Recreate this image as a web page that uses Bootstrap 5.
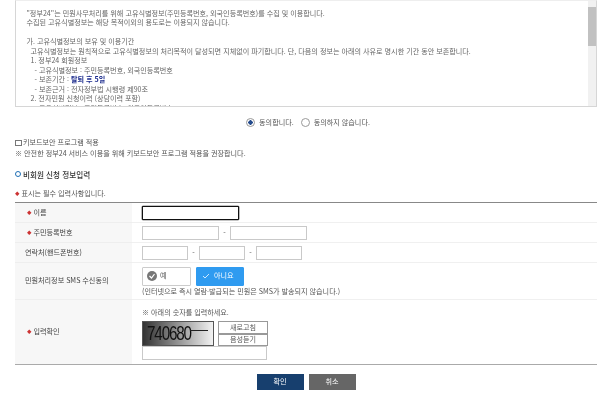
<!DOCTYPE html>
<html lang="ko"><head><meta charset="utf-8"><title>비회원 신청 정보입력</title>
<link rel="stylesheet" href="https://cdn.jsdelivr.net/npm/bootstrap@5.3.0/dist/css/bootstrap.min.css">
<style>
html,body{height:400px;overflow:hidden;background:#fff}
body{font-family:"Noto Sans CJK KR","Liberation Sans",sans-serif;font-size:7.1px;line-height:9.5px;color:#555;padding:0 3px 0 15px;filter:blur(.35px)}
.termsbox{height:107px;border:1px solid #d6d6d6;border-top-color:#eee;overflow:hidden}
.termstext{padding:7.5px 0 0 10.5px;white-space:pre;overflow:hidden;color:#666;height:105px}
.termstext b{color:#1a2a8c;font-weight:700}
.sbar{width:8px;background:#f1f1f1;padding:6px 0 7px}
.sthumb{height:39px;background:#c1c1c1}
.agree{height:31px}
.agree label{display:flex;align-items:center;gap:4px}
.agree .first{margin-left:4px;margin-right:7px}
.rad{width:9px;height:9px;border-radius:50%;border:1px solid #999;display:inline-block;background:#fff}
.rad.on{background:radial-gradient(circle,#234a8c 0 2px,#fff 2.4px)}
.kbox{width:7px;height:6px;border:1px solid #777;display:inline-block;margin-right:1px}
.notep{margin-top:1.5px}
.sectitle{font-size:7.6px;font-weight:500;color:#333;margin-top:10px;line-height:11px}
.ring{width:6px;height:6px;border:1.5px solid #1f6fb5;border-radius:50%;display:inline-block;margin-right:2px}
.req{color:#c33;font-size:4.5px;vertical-align:1px}
.reqnote{margin-top:9px;margin-bottom:4px}
.formtb{width:100%;border-top:1px solid #888;border-bottom:1px solid #aaa;margin:0}
.formtb th{width:117px;background:#f7f7f7;font-weight:400;color:#444;border-bottom:1px solid #eee;padding:0 0 0 10px;vertical-align:middle}
.formtb th.reqcell{padding-left:12px}
.formtb td{padding:0 0 0 10px;border-bottom:1px solid #f0f0f0;vertical-align:middle}
.formtb tr:last-child th,.formtb tr:last-child td{border-bottom:0}
.r20{height:20px}.r36{height:37px}.r36 td{padding-top:1px}.r64{height:65px}
.inp{height:14px;border:1px solid #c9c9c9;background:#fff;display:block;padding:0;border-radius:0}
.w97{width:97px}.w77{width:77px}.w46{width:46px}.w125{width:125px}
.focused{border:1px solid #111;border-radius:1px;box-shadow:0 0 0 .3px #111}
.dash{width:11px;text-align:center}
.pick{height:19px;font-size:7.1px;line-height:1;border-radius:1px;padding:0 0 0 4px;gap:3px;display:flex;align-items:center;width:49px;border:1px solid #ccc;background:#fff;color:#555}
.pick.sel{background:#2f9bf0;border-color:#2f9bf0;color:#fff;width:48px;margin-left:5px}
.smsnote{margin-top:1.5px}
.capnote{padding-top:4px;margin-bottom:4px}
.capt{width:72px;height:25px;background:linear-gradient(90deg,#333,#f2f2f2);border:1px solid #555;position:relative;overflow:hidden}
.capt span{display:inline-block;font-family:"Liberation Sans",sans-serif;font-size:20px;letter-spacing:-1.5px;color:#111;line-height:23px;transform:scaleX(.76);transform-origin:left center;margin-left:4px}
.capt i{position:absolute;left:47px;top:8px;width:18px;height:1px;background:#222}
.caprow{height:25px}
.capbtn{width:50px;height:12.5px;border:1px solid #999;background:#fff;font-size:7.1px;line-height:1;padding:0;border-radius:0;color:#555}
.actions{margin-top:9px;gap:5px}
.act{width:47px;height:16px;border-radius:0;border:0;font-size:7.1px;line-height:1;padding:0;color:#fff}
.act.navy{background:#173f6e}.act.gray{background:#666}
</style></head>
<body>
<div class="termsbox d-flex">
<div class="termstext flex-grow-1">"정부24"는 민원사무처리를 위해 고유식별정보(주민등록번호, 외국인등록번호)를 수집 및 이용합니다.
수집된 고유식별정보는 해당 목적이외의 용도로는 이용되지 않습니다.

가. 고유식별정보의 보유 및 이용기간
  고유식별정보는 원칙적으로 고유식별정보의 처리목적이 달성되면 지체없이 파기합니다. 단, 다음의 정보는 아래의 사유로 명시한 기간 동안 보존합니다.
  1. 정부24 회원정보
    - 고유식별정보 : 주민등록번호, 외국인등록번호
    - 보존기간 : <b>탈퇴 후 5일</b>
    - 보존근거 : 전자정부법 시행령 제90조
  2. 전자민원 신청이력 (상담이력 포함)
    - 고유식별정보 : 주민등록번호, 외국인등록번호</div>
<div class="sbar flex-shrink-0"><div class="sthumb"></div></div>
</div>

<div class="agree d-flex align-items-center justify-content-center">
<label class="first"><span class="rad on"></span>동의합니다.</label>
<label><span class="rad"></span>동의하지 않습니다.</label>
</div>

<div class="d-flex align-items-center"><span class="kbox"></span>키보드보안 프로그램 적용</div>
<div class="notep">※ 안전한 정부24 서비스 이용을 위해 키보드보안 프로그램 적용을 권장합니다.</div>

<div class="sectitle d-flex align-items-center"><span class="ring"></span>비회원 신청 정보입력</div>
<div class="reqnote"><span class="req">◆</span> 표시는 필수 입력사항입니다.</div>

<table class="formtb">
<tr class="r20"><th class="reqcell"><span class="req">◆</span> 이름</th><td><input class="inp w97 focused" aria-label="이름"></td></tr>
<tr class="r20"><th class="reqcell"><span class="req">◆</span> 주민등록번호</th><td><div class="d-flex align-items-center"><input class="inp w77" aria-label="앞자리"><span class="dash">-</span><input class="inp w77" aria-label="뒷자리"></div></td></tr>
<tr class="r20"><th>연락처(핸드폰번호)</th><td><div class="d-flex align-items-center"><input class="inp w46" aria-label="1"><span class="dash">-</span><input class="inp w46" aria-label="2"><span class="dash">-</span><input class="inp w46" aria-label="3"></div></td></tr>
<tr class="r36"><th>민원처리정보 SMS 수신동의</th><td>
<div class="d-flex">
<button class="pick"><svg width="10" height="10" viewBox="0 0 10 10"><circle cx="5" cy="5" r="5" fill="#777"/><path d="M2.5 5l2 2 3-4" fill="none" stroke="#fff" stroke-width="1.2"/></svg>예</button>
<button class="pick sel"><svg width="10" height="10" viewBox="0 0 10 10"><path d="M2 5l2 2 4-4" fill="none" stroke="#cfe8ff" stroke-width="1"/></svg>아니요</button>
</div>
<div class="smsnote">(인터넷으로 즉시 열람·발급되는 민원은 SMS가 발송되지 않습니다.)</div></td></tr>
<tr class="r64"><th class="reqcell"><span class="req">◆</span> 입력확인</th><td>
<div class="capnote">※ 아래의 숫자를 입력하세요.</div>
<div class="caprow d-flex gap-1">
<div class="capt"><span>740680</span><i></i></div>
<div class="d-flex flex-column"><button class="capbtn">새로고침</button><button class="capbtn">음성듣기</button></div>
</div>
<input class="inp w125" aria-label="입력확인"></td></tr>
</table>

<div class="actions d-flex justify-content-center">
<button class="btn act navy">확인</button><button class="btn act gray">취소</button>
</div>
</body></html>
